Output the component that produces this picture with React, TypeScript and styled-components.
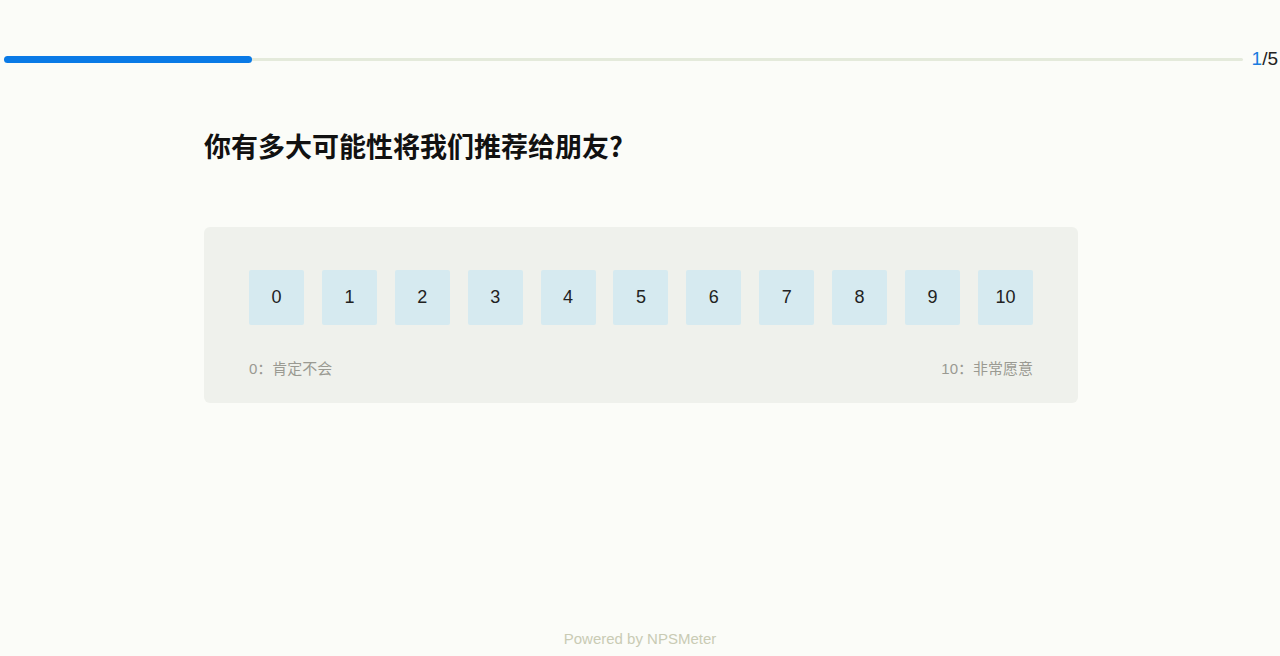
import React from 'react';
import styled, { createGlobalStyle } from 'styled-components';

const GlobalStyle = createGlobalStyle`
  html, body {
    margin: 0;
    padding: 0;
    background: #fbfcf8;
    font-family: "Liberation Sans", "Noto Sans CJK SC", sans-serif;
  }
`;

const Page = styled.div`
  height: 656px;
  display: flex;
  flex-direction: column;
  box-sizing: border-box;
  padding-top: 48px;
`;

const ProgressRow = styled.div`
  display: flex;
  align-items: center;
  padding: 0 2px 0 4px;
  gap: 9px;
`;

const Track = styled.div`
  flex: 1;
  height: 3px;
  background: #e4eadb;
  border-radius: 2px;
  display: flex;
  align-items: center;
`;

const Fill = styled.div`
  height: 7px;
  background: #0a7ae6;
  border-radius: 4px;
`;

const Counter = styled.div`
  font-size: 19px;
  color: #222;
  line-height: 22px;
`;

const Current = styled.span`
  color: #1a7de0;
`;

const Main = styled.div`
  width: 874px;
  margin-left: calc(50% - 436px);
  flex: 1;
`;

const Title = styled.h2`
  margin: 58px 0 0;
  font-size: 27px;
  line-height: 36px;
  font-weight: 700;
  color: #111;
  font-family: "Noto Sans CJK SC", sans-serif;
`;

const Panel = styled.div`
  margin-top: 63px;
  background: #eff1ec;
  border-radius: 6px;
  padding: 43px 45px 24px;
`;

const Scale = styled.div`
  display: flex;
  justify-content: space-between;
`;

const ScoreBox = styled.div`
  width: 55px;
  height: 55px;
  background: #d6eaf0;
  border-radius: 2px;
  display: flex;
  align-items: center;
  justify-content: center;
  font-size: 18px;
  color: #222;
`;

const Legend = styled.div`
  display: flex;
  justify-content: space-between;
  margin-top: 34px;
  font-size: 15px;
  line-height: 20px;
  color: #9a9a92;
  font-family: "Liberation Sans", "Noto Sans CJK SC", sans-serif;
`;

const Footer = styled.div`
  text-align: center;
  font-size: 15px;
  color: #c9cbb4;
  padding-bottom: 9px;
`;

export default function App() {
  const current = 1;
  const total = 5;
  return (
    <Page>
      <GlobalStyle />
      <ProgressRow>
        <Track>
          <Fill style={{ width: `${(current / total) * 100}%` }} />
        </Track>
        <Counter>
          <Current>{current}</Current>/{total}
        </Counter>
      </ProgressRow>
      <Main>
        <Title>你有多大可能性将我们推荐给朋友?</Title>
        <Panel>
          <Scale>
            {Array.from({ length: 11 }, (_, i) => (
              <ScoreBox key={i}>{i}</ScoreBox>
            ))}
          </Scale>
          <Legend>
            <span>0：肯定不会</span>
            <span>10：非常愿意</span>
          </Legend>
        </Panel>
      </Main>
      <Footer>Powered by NPSMeter</Footer>
    </Page>
  );
}
